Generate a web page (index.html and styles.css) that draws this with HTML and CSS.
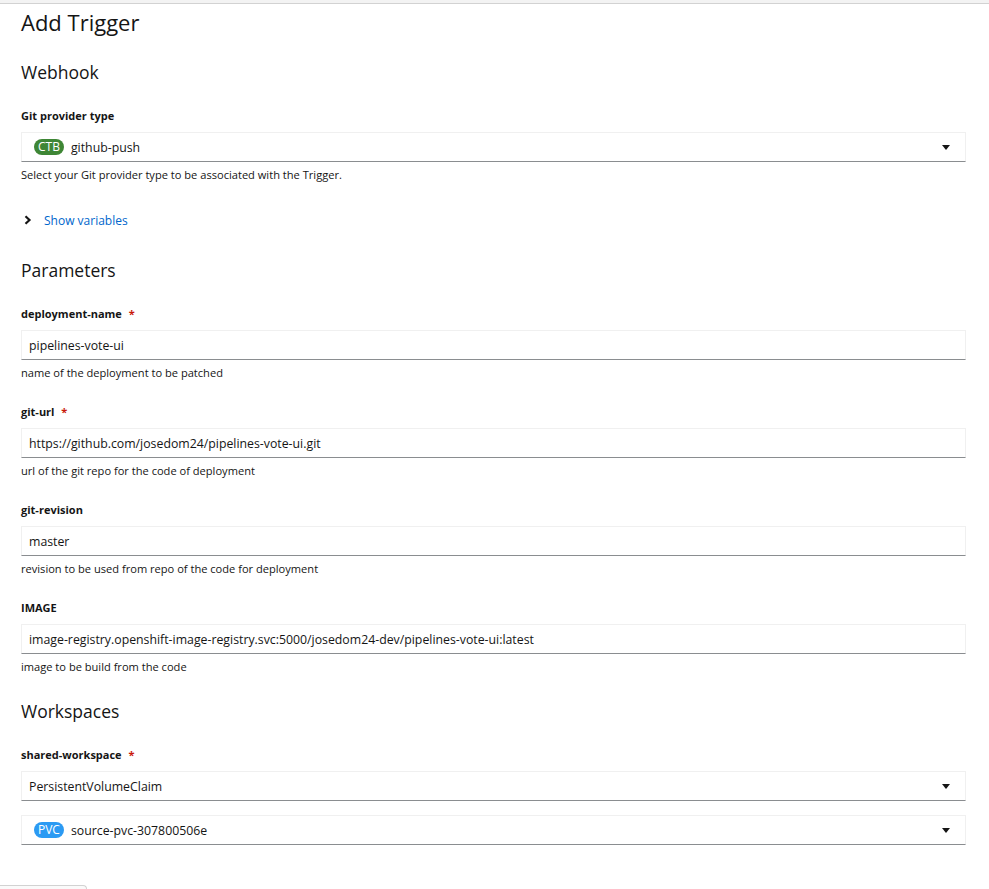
FILE: index.html
```html
<!DOCTYPE html>
<html>
<head>
<meta charset="utf-8">
<link rel="stylesheet" href="styles.css">
</head>
<body>
<div class="topbar"></div>
<main class="page">
  <h1 class="title">Add Trigger</h1>

  <h2 class="section">Webhook</h2>
  <div class="field">
    <label class="label">Git provider type</label>
    <div class="control select">
      <span class="badge badge-ctb">CTB</span>
      <span class="value">github-push</span>
      <svg class="caret" width="8" height="5" viewBox="0 0 8 5"><path d="M0 0 H8 L4 5 Z" fill="#151515"/></svg>
    </div>
    <div class="helper">Select your Git provider type to be associated with the Trigger.</div>
  </div>

  <div class="toggle">
    <svg class="chev" width="8" height="10" viewBox="0 0 8 10"><path d="M1.5 1.2 L5.5 5 L1.5 8.8" fill="none" stroke="#151515" stroke-width="2.2"/></svg>
    <span class="link">Show variables</span>
  </div>

  <h2 class="section params">Parameters</h2>
  <div class="field">
    <label class="label">deployment-name <span class="req">*</span></label>
    <div class="control"><span class="value">pipelines-vote-ui</span></div>
    <div class="helper">name of the deployment to be patched</div>
  </div>
  <div class="field">
    <label class="label">git-url <span class="req">*</span></label>
    <div class="control"><span class="value">https://github.com/josedom24/pipelines-vote-ui.git</span></div>
    <div class="helper">url of the git repo for the code of deployment</div>
  </div>
  <div class="field">
    <label class="label">git-revision</label>
    <div class="control"><span class="value">master</span></div>
    <div class="helper">revision to be used from repo of the code for deployment</div>
  </div>
  <div class="field">
    <label class="label">IMAGE</label>
    <div class="control"><span class="value">image-registry.openshift-image-registry.svc:5000/josedom24-dev/pipelines-vote-ui:latest</span></div>
    <div class="helper">image to be build from the code</div>
  </div>

  <h2 class="section ws">Workspaces</h2>
  <div class="field">
    <label class="label">shared-workspace <span class="req">*</span></label>
    <div class="control select">
      <span class="value">PersistentVolumeClaim</span>
      <svg class="caret" width="8" height="5" viewBox="0 0 8 5"><path d="M0 0 H8 L4 5 Z" fill="#151515"/></svg>
    </div>
    <div class="control select second">
      <span class="badge badge-pvc">PVC</span>
      <span class="value">source-pvc-307800506e</span>
      <svg class="caret" width="8" height="5" viewBox="0 0 8 5"><path d="M0 0 H8 L4 5 Z" fill="#151515"/></svg>
    </div>
  </div>
  <div class="footer">
    <div class="btn-stub"></div>
  </div>
</main>
</body>
</html>
```

FILE: styles.css
```css
* { box-sizing: border-box; }
html, body { margin: 0; padding: 0; background: #fff; }
body {
  font-family: "Open Sans", "Liberation Sans", sans-serif;
  color: #151515;
  height: 889px;
  overflow: hidden;
}
.topbar {
  height: 4px;
  background: #f3f3f3;
  border-bottom: 1px solid #d2d2d2;
}
.page {
  padding: 0 23px 0 21px;
  display: flex;
  flex-direction: column;
}
.title {
  margin: 4px 0 0;
  font-size: 22px;
  line-height: 29px;
  font-weight: 400;
}
.section {
  margin: 23px 0 0;
  font-size: 17.5px;
  line-height: 24px;
  font-weight: 400;
}
.field {
  display: flex;
  flex-direction: column;
  margin-top: 23px;
}
.field + .field { margin-top: 21px; }
.label {
  font-size: 11px;
  line-height: 18px;
  font-weight: 700;
  margin-bottom: 7px;
}
.req { color: #c9190b; margin-left: 4px; }
.control {
  height: 30px;
  display: flex;
  align-items: center;
  padding: 0 7px;
  border: 1px solid #f0f0f0;
  border-bottom-color: #8a8d90;
  font-size: 12.3px;
}
.control.second { margin-top: 14px; }
.select .value { flex: 1; }
.badge {
  color: #fff;
  font-size: 12px;
  line-height: 16px;
  padding: 0 4px;
  border-radius: 9px;
  margin: 0 7px 0 5px;
}
.badge-ctb { background: #3e8635; }
.badge-pvc { background: #2b9af3; }
.caret { margin-right: 8px; }
.helper {
  margin-top: 4px;
  font-size: 11.1px;
  line-height: 18px;
}
.toggle {
  margin-top: 27px;
  display: flex;
  align-items: center;
  height: 18px;
  font-size: 12px;
}
.chev { margin: 0 12px 0 3px; }
.link { color: #0066cc; }
.params { margin-top: 29px; }
.ws { margin-top: 23px; }
.footer {
  margin-top: 40px;
  margin-left: -21px;
}
.btn-stub {
  width: 87px;
  height: 20px;
  border: 1px solid #d2d2d2;
  border-bottom: 0;
  border-left: 0;
  border-top-right-radius: 4px;
  background: #fafafa;
}
```
